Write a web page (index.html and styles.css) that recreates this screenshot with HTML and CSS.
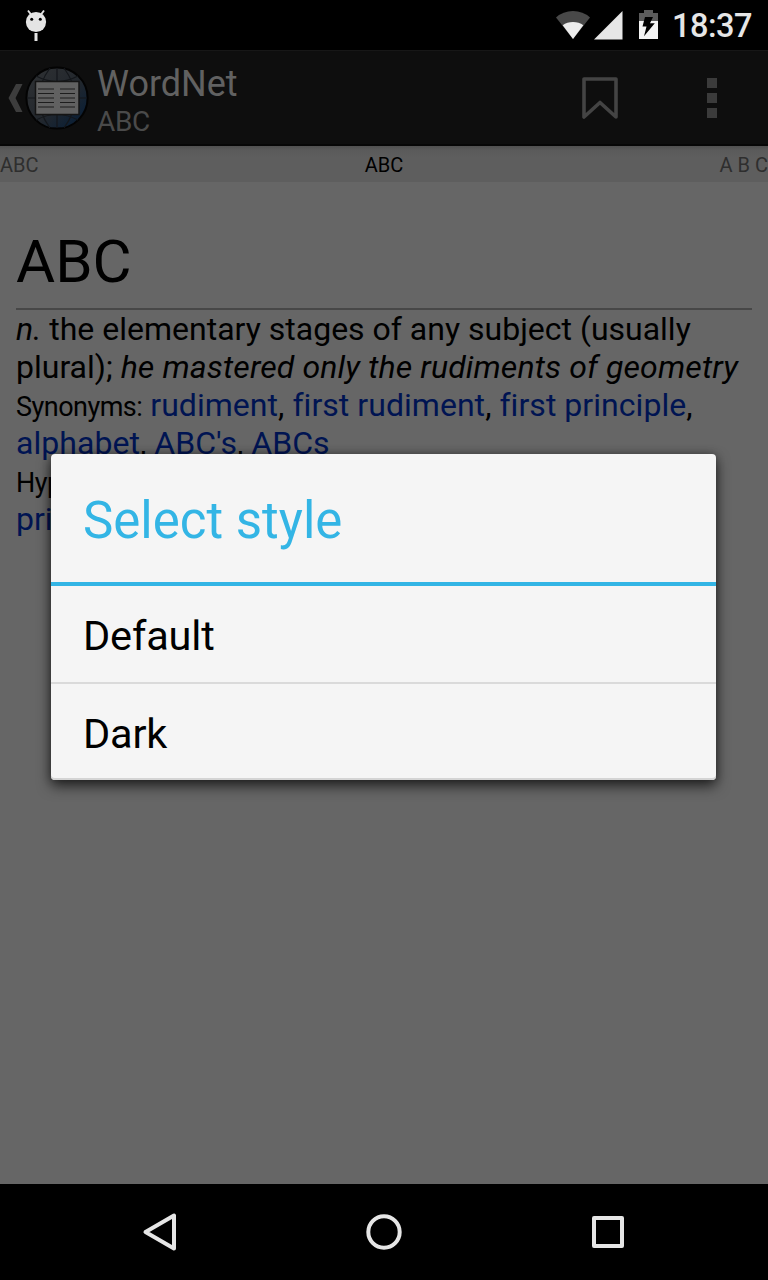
FILE: index.html
```html
<!DOCTYPE html>
<html lang="en">
<head>
<meta charset="utf-8">
<title>WordNet</title>
<link rel="stylesheet" href="styles.css">
</head>
<body>
<div class="screen">
  <header class="status">
    <svg class="droid" width="24" height="34" viewBox="24 8 24 34">
      <path d="M28 10.5l3 4M44 10.5l-3 4" stroke="#e4e4e4" stroke-width="1.9"/>
      <circle cx="36" cy="22" r="10.1" fill="#e4e4e4"/>
      <circle cx="31.7" cy="19.3" r="1.5"/><circle cx="40.3" cy="19.3" r="1.5"/>
      <path d="M34.5 33h3v8h-3z" fill="#e4e4e4"/>
    </svg>
    <svg class="signals" width="104" height="34" viewBox="554 8 104 34">
      <path d="M573 39L556 17.5Q563 11 573 11T590 17.5z" fill="#484848"/>
      <path d="M573 39L562.7 25.2Q567 22 573 22T583.3 25.2z" fill="#ececec"/>
      <path d="M594 39.5L622.5 11v28.5z" fill="#e6e6e6"/>
      <path d="M639 21v-8h5v-3h9v3h5v8z" fill="#5c5c5c"/>
      <path d="M639 21h19v18h-19z" fill="#f4f4f4"/>
      <path d="M645 17h8l-3 6.2h4.8l-10.8 13 2.5-9.8h-4z" fill="#000"/>
    </svg>
    <span class="clock">18:37</span>
  </header>
  <div class="appbar">
    <svg class="back" width="89" height="66" viewBox="0 65 89 66">
      <defs>
        <linearGradient id="globe" x1="0" y1="0" x2="1" y2="1"><stop offset="0" stop-color="#303234"/><stop offset=".55" stop-color="#22272d"/><stop offset=".82" stop-color="#0e2034"/><stop offset="1" stop-color="#101820"/></linearGradient>
      </defs>
      <path d="M16 84h6.5L15.5 98l7 14H16L8.500 98z" fill="#3d3d3d"/>
      <circle cx="57" cy="98" r="30.600" fill="url(#globe)" stroke="#030303" stroke-width="2"/>
      <path d="M57 68v60M27 98h60M50 68Q28 98 50 128M64 68Q86 98 64 128M36 76Q57 87 78 76M36 120Q57 109 78 120" fill="none" stroke="#14171b" stroke-width="1.200"/>
      <path d="M35.500 81.500h43.500v33h-43.500z" fill="#616161" stroke="#141414" stroke-width="1.500"/>
      <path d="M38 89h16M60 89h15M38 98h16M60 98h15M38 107h16M60 107h15" stroke="#3e3e3e" stroke-width="1.900"/>
      <path d="M38 93.500h16M60 93.500h15M38 102.500h16M60 102.500h15" stroke="#1d1d1d" stroke-width="1.200"/>
    </svg>
    <div class="heading">
      <div class="app-name">WordNet</div>
      <div class="app-sub">ABC</div>
    </div>
    <svg class="actions" width="140" height="46" viewBox="580 75 140 46">
      <path d="M584 79h32v38l-16-14.500L584 117z" fill="none" stroke="#444" stroke-width="3.600" stroke-linejoin="round"/>
      <path d="M707 78h10v10h-10zM707 93h10v10h-10zM707 108h10v10h-10z" fill="#3b3b3b"/>
    </svg>
  </div>
  <nav class="tabs"><span>ABC</span><span class="current">ABC</span><span>A B C</span></nav>
  <main class="article">
    <h1>ABC</h1>
    <p><i>n.</i> the elementary stages of any subject (usually</p>
    <p>plural); <i class="example">he mastered only the rudiments of geometry</i></p>
    <p class="links"><small>Synonyms:</small> <a>rudiment</a>, <a>first rudiment</a>, <a>first principle</a>,</p>
    <p class="links"><a>alphabet</a>, <a>ABC's</a>, <a>ABCs</a></p>
    <p><small>Hyp</small></p>
    <p><a>pri</a></p>
  </main>
  <footer class="navbar">
    <svg width="36" height="40" viewBox="142 1212 36 40"><path d="M174 1215.500v33L145.500 1232z"/></svg>
    <svg width="36" height="40" viewBox="366 1212 36 40"><circle cx="384" cy="1232" r="15.700"/></svg>
    <svg width="36" height="40" viewBox="590 1212 36 40"><path d="M594 1218h28v28h-28z"/></svg>
  </footer>
  <section class="dialog">
    <h2>Select style</h2>
    <div class="option">Default</div>
    <div class="option">Dark</div>
  </section>
</div>
</body>
</html>
```
FILE: styles.css
```css
* { box-sizing: border-box; margin: 0; padding: 0; }
body { background: #666; font-family: Roboto, sans-serif; color: #000; }
svg { display: block; flex: none; }
.screen { position: relative; width: 768px; height: 1280px; display: flex; flex-direction: column; overflow: hidden; white-space: nowrap; }
.status { height: 50px; background: #000; display: flex; align-items: flex-start; padding: 8px 16px 0 24px; }
.signals { margin-left: auto; }
.clock { margin-left: 14px; width: 80px; font-size: 32.5px; line-height: 36px; font-weight: 500; color: #e6e6e6; letter-spacing: -0.5px; }
.appbar { height: 96px; background: #0e0e0e; border-top: 1px solid #171717; border-bottom: 2px solid #070707; display: flex; align-items: flex-start; padding-right: 48px; }
.back { margin-top: 14px; }
.heading { margin: 12px 0 0 8px; }
.app-name { font-size: 36px; line-height: 42px; color: #616161; }
.app-sub { font-size: 28px; line-height: 34px; color: #4a4a4a; letter-spacing: -0.3px; }
.actions { margin: 24px 0 0 auto; }
.tabs { height: 36px; background: linear-gradient(#505050, #5a5a5a 4px, #5e5e5e 12px, #5e5e5e); display: grid; grid-template-columns: 1fr auto 1fr; font-size: 20px; line-height: 38px; color: #2e2e2e; }
.tabs .current { color: #000; }
.tabs span:last-child { text-align: right; }
.article { flex: 1; padding: 0 16px; }
.article h1 { height: 128px; padding-top: 45px; border-bottom: 2px solid #474747; font-size: 60px; line-height: 70px; font-weight: 400; }
.article p { font-size: 32px; line-height: 38px; height: 38px; }
.article .example { letter-spacing: 0.14px; }
.article .links { letter-spacing: 0.04px; }
.article small { font-size: 27px; line-height: 1; letter-spacing: -0.52px; }
.article a { color: #001452; }
.navbar { height: 96px; background: #000; display: flex; align-items: center; justify-content: center; gap: 188px; }
.navbar svg { fill: none; stroke: #e6e6e6; stroke-width: 4; stroke-linejoin: round; }
.dialog { position: absolute; left: 51px; top: 454px; width: 665px; height: 326px; background: #f5f5f5; border-radius: 4px; box-shadow: 0 6px 14px rgba(0,0,0,.65), 0 0 8px rgba(0,0,0,.3), inset 0 -2px 0 #d4d4d4; }
.dialog h2 { height: 132px; border-bottom: 4px solid #33b5e5; padding-left: 32px; font-size: 51px; line-height: 134px; font-weight: 400; color: #33b5e5; }
.option { height: 96px; padding-left: 32px; font-size: 41.500px; line-height: 100px; letter-spacing: -0.18px; }
h2 + .option { height: 98px; border-bottom: 2px solid #dadada; }
```
